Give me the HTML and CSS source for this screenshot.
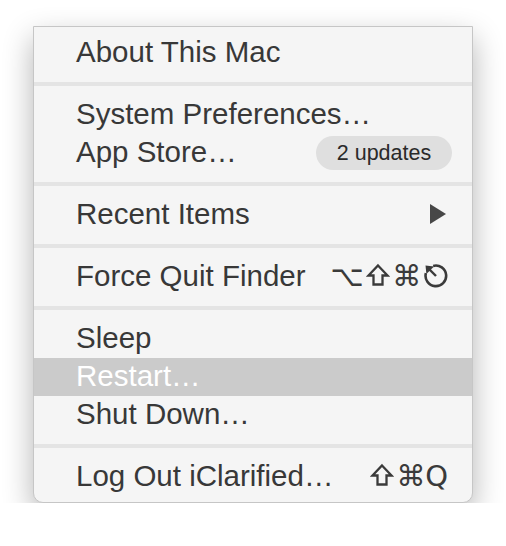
FILE: index.html
```html
<!DOCTYPE html>
<html>
<head>
<meta charset="utf-8">
<link rel="stylesheet" href="styles.css">
</head>
<body>
<div class="menu">
  <div class="section first">
    <div class="item"><span class="label">About This Mac</span></div>
  </div>
  <div class="sep"></div>
  <div class="section">
    <div class="item"><span class="label">System Preferences…</span></div>
    <div class="item"><span class="label">App Store…</span><span class="badge">2 updates</span></div>
  </div>
  <div class="sep"></div>
  <div class="section">
    <div class="item submenu"><span class="label">Recent Items</span>
      <svg class="arrow" width="16" height="20" viewBox="0 0 16 20"><polygon points="0,0 16,10 0,20" fill="#474747"/></svg>
    </div>
  </div>
  <div class="sep"></div>
  <div class="section">
    <div class="item"><span class="label">Force Quit Finder</span>
      <span class="keys">⌥<svg class="shift" width="24" height="24" viewBox="0 0 24 24"><polygon points="12,2.5 21.5,12.5 16.5,12.5 16.5,21.5 7.5,21.5 7.5,12.5 2.5,12.5" fill="none" stroke="#3a3a3a" stroke-width="2.3" stroke-linejoin="miter"/></svg>⌘<svg class="esc" width="24" height="24" viewBox="0 0 24 24"><path d="M9.2 1.9 A10.3 10.3 0 1 1 1.9 9.2" fill="none" stroke="#3a3a3a" stroke-width="2.6"/><path d="M12 12 L4 4" stroke="#3a3a3a" stroke-width="2.4"/><polygon points="1.5,1.5 10,2.4 2.4,10" fill="#3a3a3a"/></svg></span>
    </div>
  </div>
  <div class="sep"></div>
  <div class="section">
    <div class="item"><span class="label">Sleep</span></div>
    <div class="item active"><span class="label">Restart…</span></div>
    <div class="item"><span class="label">Shut Down…</span></div>
  </div>
  <div class="sep"></div>
  <div class="section last">
    <div class="item"><span class="label">Log Out iClarified…</span><span class="keys"><svg class="shift" width="24" height="24" viewBox="0 0 24 24"><polygon points="12,2.5 21.5,12.5 16.5,12.5 16.5,21.5 7.5,21.5 7.5,12.5 2.5,12.5" fill="none" stroke="#3a3a3a" stroke-width="2.3" stroke-linejoin="miter"/></svg>⌘Q</span></div>
  </div>
</div>
</body>
</html>
```
FILE: styles.css
```css
html, body {
  margin: 0;
  padding: 0;
  background: #ffffff;
}
body {
  padding: 26px 0 0 33px;
  font-family: "Liberation Sans", Arial, sans-serif;
}
.menu {
  box-sizing: border-box;
  width: 440px;
  background: #f5f5f5;
  border: 1px solid #c6c6c6;
  border-radius: 0 0 10px 10px;
  box-shadow: 0 12px 30px rgba(0, 0, 0, 0.3);
  padding: 7px 0 6px;
}
.sep {
  height: 4px;
  background: #e4e4e4;
  margin: 10px 0;
}
.item {
  height: 38px;
  display: flex;
  align-items: center;
  justify-content: space-between;
  padding: 0 20px 2px 42px;
  box-sizing: border-box;
  font-size: 29.5px;
  color: #383838;
}
.item.active {
  background: #cbcbcb;
  color: #ffffff;
}
.submenu {
  padding-right: 26px;
}
.badge {
  display: flex;
  align-items: center;
  justify-content: center;
  width: 136px;
  height: 34px;
  border-radius: 17px;
  background: #dfdfdf;
  font-size: 21.5px;
  color: #2a2a2a;
  margin-top: 2px;
}
.keys {
  display: flex;
  align-items: center;
  gap: 1px;
  font-family: "DejaVu Sans", sans-serif;
  font-size: 29px;
  color: #3a3a3a;
  margin-right: 4px;
}
.shift {
  display: block;
  margin: 0 1px 2px;
}
.esc {
  display: block;
  margin-left: 2px;
}
```
